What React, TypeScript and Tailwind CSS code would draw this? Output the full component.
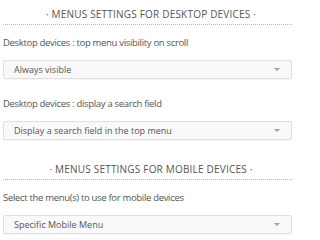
import React from "react";

function Heading({ text }: { text: string }) {
  return (
    <div className="border-b border-dotted border-[#b8b8b8] pb-[3px] pl-[7px] text-center text-[10px] leading-[14px] tracking-[0.2px] text-[#555]">
      · {text} ·
    </div>
  );
}

function Label({ text }: { text: string }) {
  return <div className="text-[9.5px] leading-[14px] tracking-[-0.32px] text-[#555]">{text}</div>;
}

function Select({ value }: { value: string }) {
  return (
    <div className="flex h-[19px] items-center justify-between rounded-[2px] border border-[#e0e0e0] bg-[#f9f9f9] pl-[10px] pr-[11px] shadow-[0_1px_1px_rgba(0,0,0,0.03)]">
      <span className="text-[9px] leading-[12px] text-[#555]">{value}</span>
      <span className="h-0 w-0 border-x-[3px] border-t-[3px] border-x-transparent border-t-[#a0a0a0]" />
    </div>
  );
}

export default function App() {
  return (
    <div
      className="h-[238px] w-[300px] bg-white pl-[3px] pr-[8px]"
      style={{ fontFamily: '"Open Sans", "Noto Sans", sans-serif' }}
    >
      <div className="pt-[7px]">
        <Heading text="MENUS SETTINGS FOR DESKTOP DEVICES" />
      </div>
      <div className="mt-[11px]">
        <Label text="Desktop devices : top menu visibility on scroll" />
      </div>
      <div className="mt-[10px]">
        <Select value="Always visible" />
      </div>
      <div className="mt-[18px]">
        <Label text="Desktop devices : display a search field" />
      </div>
      <div className="mt-[10px]">
        <Select value="Display a search field in the top menu" />
      </div>
      <div className="mt-[22px]">
        <Heading text="MENUS SETTINGS FOR MOBILE DEVICES" />
      </div>
      <div className="mt-[11px]">
        <Label text="Select the menu(s) to use for mobile devices" />
      </div>
      <div className="mt-[10px]">
        <Select value="Specific Mobile Menu" />
      </div>
    </div>
  );
}
